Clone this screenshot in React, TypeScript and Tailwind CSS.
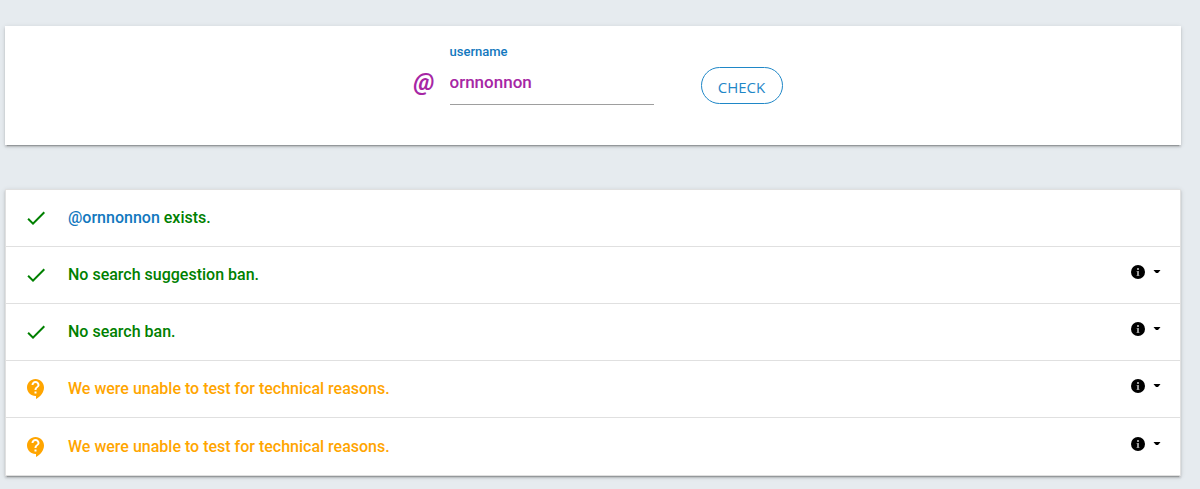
import { MdContactSupport, MdDone } from "react-icons/md";

type Result = {
  status: "ok" | "unknown";
  text: string;
  account?: string;
  details: boolean;
};

const results: Result[] = [
  { status: "ok", text: "exists.", account: "ornnonnon", details: false },
  { status: "ok", text: "No search suggestion ban.", details: true },
  { status: "ok", text: "No search ban.", details: true },
  { status: "unknown", text: "We were unable to test for technical reasons.", details: true },
  { status: "unknown", text: "We were unable to test for technical reasons.", details: true },
];

const cardShadow =
  "shadow-[0_2px_2px_0_rgba(0,0,0,0.14),0_3px_1px_-2px_rgba(0,0,0,0.2),0_1px_5px_0_rgba(0,0,0,0.12)]";

function InfoIcon() {
  return (
    <svg viewBox="0 0 14 14" className="size-3.5" aria-hidden="true">
      <circle cx="7" cy="7" r="7" fill="#000" />
      <path d="M6 3h2v2H6zM6 6h2v5H6z" fill="#fff" fillOpacity="0.6" />
      <path d="M5 6h1v1H5zM5 10h1v1H5zM8 10h1v1H8z" fill="#fff" fillOpacity="0.2" />
    </svg>
  );
}

function CaretIcon() {
  return (
    <svg viewBox="0 0 8 4" className="h-1 w-2" aria-hidden="true">
      <path d="M0.5 0h7L5 3H3z" fill="#000" />
    </svg>
  );
}

function ResultRow({ result }: { result: Result }) {
  const ok = result.status === "ok";
  return (
    <li className="flex h-[57px] items-center border-b border-[#e0e0e0] pr-[18px] pl-[18px] last:border-b-0">
      {ok ? (
        <MdDone className="size-6 shrink-0 text-[#008000]" />
      ) : (
        <MdContactSupport className="size-6 shrink-0 text-[#ffa500]" />
      )}
      <p className={`ml-5 grow text-base font-medium ${ok ? "text-[#008000]" : "text-[#ffa500]"}`}>
        {result.account && (
          <>
            <a href={`#${result.account}`} className="text-[#1278be]">
              @{result.account}
            </a>{" "}
          </>
        )}
        {result.text}
      </p>
      {result.details && (
        <button type="button" aria-label="Details" className="mr-px mb-1.5 flex items-center gap-2">
          <InfoIcon />
          <CaretIcon />
        </button>
      )}
    </li>
  );
}

export default function App() {
  return (
    <main className="min-h-screen bg-[#e6ebef] pt-[26px] pr-[19px] pb-3 pl-[5px] font-['Roboto',sans-serif]">
      <form
        onSubmit={(event) => event.preventDefault()}
        className={`flex h-[119px] justify-center bg-white pt-[18px] pl-2.5 ${cardShadow}`}
      >
        <span className="mt-6 w-9 text-2xl leading-7 font-bold text-[#a626a4] italic">@</span>
        <div className="w-[204px]">
          <label htmlFor="username" className="block text-[13px] leading-4 font-medium text-[#1278be]">
            username
          </label>
          <input
            id="username"
            defaultValue="ornnonnon"
            className="block h-[45px] w-full border-b border-[#9e9e9e] text-[17px] font-medium text-[#a626a4] outline-none"
          />
        </div>
        <button
          type="submit"
          className="mt-[23px] ml-[47px] h-[37px] w-[82px] rounded-full border border-[#1f87c7] pt-1 font-['Open_Sans',sans-serif] text-[15px] text-[#1f87c7]"
        >
          CHECK
        </button>
      </form>
      <ul className={`mt-11 border border-[#e0e0e0] bg-white ${cardShadow}`}>
        {results.map((result, index) => (
          <ResultRow key={index} result={result} />
        ))}
      </ul>
    </main>
  );
}
